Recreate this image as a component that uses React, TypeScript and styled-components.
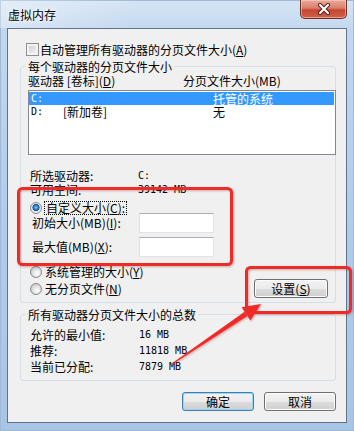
import styled, { createGlobalStyle } from 'styled-components'

const GlobalStyle = createGlobalStyle`
	html, body {
		margin: 0;
		padding: 0;
		background: #fff;
	}
	body {
		font-family: "Noto Sans CJK SC", "Noto Sans", sans-serif;
		font-size: 12px;
		color: #000;
	}
`

const Window = styled.div`
	position: relative;
	width: 354px;
	height: 431px;
	box-sizing: border-box;
	display: flex;
	flex-direction: column;
	background: linear-gradient(180deg, #d6e5f5 0px, #c3d8ef 28px, #b2cceb 200px, #a9c5e6 431px);
	box-shadow: inset 0 0 0 1px #9fb9d6;
`

const TitleBar = styled.div`
	height: 28px;
	display: flex;
	align-items: flex-start;
	padding-left: 8px;
	background: linear-gradient(90deg, rgba(255, 255, 255, 0.35) 0px, rgba(255, 255, 255, 0) 140px);
`

const Title = styled.div`
	margin-top: 9px;
	font-size: 12px;
	line-height: 12px;
	text-shadow: 0 0 6px #fff, 0 0 3px #fff;
`

const CloseButton = styled.div`
	margin-left: auto;
	margin-right: 7px;
	width: 47px;
	height: 19px;
	box-sizing: border-box;
	border: 1px solid #6d3026;
	border-top: none;
	border-radius: 0 0 5px 5px;
	background: linear-gradient(180deg, #e9a99a 0%, #d9806c 45%, #c7462f 55%, #d1604a 100%);
	box-shadow: inset 0 0 0 1px rgba(255, 220, 210, 0.5);
	display: flex;
	align-items: center;
	justify-content: center;
`

const Client = styled.div`
	flex: 1;
	margin: 0 7px 8px 7px;
	border: 1px solid #5f738c;
	background: #f0f0f0;
	padding: 0 10px 0 12px;
	display: flex;
	flex-direction: column;
`

const CheckRow = styled.div`
	margin-top: 14px;
	height: 13px;
	display: flex;
	align-items: center;
	gap: 1px;
	padding-left: 6px;
	line-height: 13px;
`

const CheckBox = styled.span`
	width: 13px;
	height: 13px;
	box-sizing: border-box;
	border: 1px solid #8e8f8f;
	background: linear-gradient(135deg, #cbcbcb 0%, #f7f7f7 100%);
	box-shadow: inset 0 0 0 2px #f4f4f4;
`

const Group = styled.fieldset<{ $top: number; $bottom: number }>`
	margin: ${(p) => p.$top}px 0 0 0;
	padding: 0 0 ${(p) => p.$bottom}px 0;
	border: 1px solid #d5dfe5;
	border-radius: 3px;
	min-width: 0;
`

const Legend = styled.legend`
	padding: 0 2px;
	margin-left: 5px;
	font-size: 12px;
	line-height: 13px;
`

const HeaderRow = styled.div`
	margin-top: 2px;
	padding-left: 7px;
	display: grid;
	grid-template-columns: 155px 1fr;
	line-height: 12px;
`

const ListBox = styled.div`
	margin: 3px 0 0 7px;
	width: 308px;
	height: 65px;
	box-sizing: border-box;
	border: 1px solid #828790;
	background: #fff;
	padding: 1px 1px 0 0;
`

const ListRow = styled.div<{ $selected?: boolean }>`
	height: 13px;
	line-height: 13px;
	padding-left: 2px;
	display: grid;
	grid-template-columns: 32px 150px 1fr;
	background: ${(p) => (p.$selected ? '#3399ff' : 'transparent')};
	color: ${(p) => (p.$selected ? '#fff' : '#000')};
`

const Mono = styled.span`
	font-family: "DejaVu Sans Mono", "Liberation Mono", monospace;
	font-size: 10px;
`

const InfoRow = styled.div<{ $label: number; $height: number; $top?: number }>`
	margin-top: ${(p) => p.$top ?? 0}px;
	padding-left: 9px;
	height: ${(p) => p.$height}px;
	line-height: ${(p) => p.$height}px;
	display: grid;
	grid-template-columns: ${(p) => p.$label}px 1fr;
`

const RadioRow = styled.div<{ $top: number; $height: number; $indent?: number }>`
	margin-top: ${(p) => p.$top}px;
	height: ${(p) => p.$height}px;
	line-height: ${(p) => p.$height}px;
	padding-left: ${(p) => p.$indent ?? 9}px;
	display: flex;
	align-items: center;
	gap: 3px;
`

const Radio = styled.span<{ $checked?: boolean }>`
	width: 12px;
	height: 12px;
	box-sizing: border-box;
	border-radius: 50%;
	border: 1px solid #8a8a8a;
	background: ${(p) =>
		p.$checked
			? 'radial-gradient(circle at 50% 45%, #8fd0fb 0px, #2a7fd4 2px, #154f93 3.3px, #e6e6e6 3.8px, #fbfbfb 100%)'
			: 'radial-gradient(circle at 60% 65%, #ffffff 0px, #f2f2f2 2px, #d0d0d0 6px)'};
`

const FocusText = styled.span`
	outline: 1px dotted #000;
	outline-offset: 0;
	padding: 0 1px;
	line-height: 12px;
`

const FieldRow = styled.div<{ $top: number }>`
	margin-top: ${(p) => p.$top}px;
	padding-left: 11px;
	display: grid;
	grid-template-columns: 107px 75px;
	align-items: center;
	line-height: 12px;
`

const TextBox = styled.div`
	height: 20px;
	box-sizing: border-box;
	border: 1px solid #e2e3ea;
	border-top-color: #abadb3;
	border-left-color: #dbdfe6;
	background: #fff;
`

const ButtonRow = styled.div`
	margin-top: 1px;
	height: 19px;
	padding: 0 7px 0 9px;
	display: flex;
	align-items: center;
	justify-content: space-between;
`

const Button = styled.div<{ $default?: boolean }>`
	width: 72px;
	height: 19px;
	box-sizing: border-box;
	border: 1px solid ${(p) => (p.$default ? '#3c7fb1' : '#707070')};
	border-radius: 3px;
	background: linear-gradient(180deg, #f2f2f2 0%, #ebebeb 50%, #dddddd 50%, #cfcfcf 100%);
	box-shadow: ${(p) => (p.$default ? 'inset 0 0 0 1px #9fd4f4' : 'inset 0 0 0 1px #fcfcfc')};
	text-align: center;
	font-size: 12px;
	line-height: 17px;
`

const SettingsButton = styled(Button)`
	width: 74px;
`

const DialogButtons = styled.div`
	margin-top: 11px;
	display: flex;
	justify-content: flex-end;
	gap: 10px;
`

const Overlay = styled.svg`
	position: absolute;
	left: 0;
	top: 0;
	width: 354px;
	height: 431px;
	pointer-events: none;
	filter: drop-shadow(1px 1px 1px rgba(120, 0, 0, 0.3));
`

const Key = styled.u`
	text-underline-offset: 1px;
`

export default function App() {
	return (
		<>
			<GlobalStyle />
			<Window>
				<TitleBar>
					<Title>虚拟内存</Title>
					<CloseButton>
						<svg width="14" height="12" viewBox="0 0 14 12">
							<path d="M3 2 L11 10 M11 2 L3 10" stroke="#4a1e16" strokeWidth="4" strokeLinecap="round" />
							<path d="M3 2 L11 10 M11 2 L3 10" stroke="#fff" strokeWidth="2.2" strokeLinecap="round" />
						</svg>
					</CloseButton>
				</TitleBar>
				<Client>
					<CheckRow>
						<CheckBox />
						<span>自动管理所有驱动器的分页文件大小(<Key>A</Key>)</span>
					</CheckRow>

					<Group $top={4} $bottom={4}>
						<Legend>每个驱动器的分页文件大小</Legend>
						<HeaderRow>
							<span>驱动器 [卷标](<Key>D</Key>)</span>
							<span>分页文件大小(MB)</span>
						</HeaderRow>
						<ListBox>
							<ListRow $selected>
								<Mono>C:</Mono>
								<span></span>
								<span>托管的系统</span>
							</ListRow>
							<ListRow>
								<Mono>D:</Mono>
								<span>[新加卷]</span>
								<span>无</span>
							</ListRow>
						</ListBox>

						<InfoRow $label={108} $height={14} $top={14}>
							<span>所选驱动器:</span>
							<Mono>C:</Mono>
						</InfoRow>
						<InfoRow $label={108} $height={14}>
							<span>可用空间:</span>
							<Mono>39142 MB</Mono>
						</InfoRow>

						<RadioRow $top={5} $height={11}>
							<Radio $checked />
							<FocusText>自定义大小(<Key>C</Key>):</FocusText>
						</RadioRow>
						<FieldRow $top={0}>
							<span>初始大小(MB)(<Key>I</Key>):</span>
							<TextBox />
						</FieldRow>
						<FieldRow $top={4}>
							<span>最大值(MB)(<Key>X</Key>):</span>
							<TextBox />
						</FieldRow>

						<RadioRow $top={9} $height={12}>
							<Radio />
							<span>系统管理的大小(<Key>Y</Key>)</span>
						</RadioRow>
						<ButtonRow>
							<RadioRow $top={0} $height={12} $indent={0}>
								<Radio />
								<span>无分页文件(<Key>N</Key>)</span>
							</RadioRow>
							<SettingsButton>设置(<Key>S</Key>)</SettingsButton>
						</ButtonRow>
					</Group>

					<Group $top={5} $bottom={5}>
						<Legend>所有驱动器分页文件大小的总数</Legend>
						<InfoRow $label={109} $height={16} $top={6}>
							<span>允许的最小值:</span>
							<Mono>16 MB</Mono>
						</InfoRow>
						<InfoRow $label={109} $height={16}>
							<span>推荐:</span>
							<Mono>11818 MB</Mono>
						</InfoRow>
						<InfoRow $label={109} $height={16}>
							<span>当前已分配:</span>
							<Mono>7879 MB</Mono>
						</InfoRow>
					</Group>

					<DialogButtons>
						<Button $default>确定</Button>
						<Button>取消</Button>
					</DialogButtons>
				</Client>

				<Overlay viewBox="0 0 354 431">
					<rect x="18.5" y="188.5" width="213" height="76" rx="4" fill="none" stroke="#ef2b27" strokeWidth="3" />
					<rect x="246.5" y="267.5" width="104" height="45" rx="4" fill="none" stroke="#ef2b27" strokeWidth="3" />
					<polygon points="172.3,364.5 171.7,363.5 244.6,311.8 247.4,316.0" fill="#ef2b27" />
					<polygon points="261,304 241.6,307.3 250.4,320.6" fill="#ef2b27" />
				</Overlay>
			</Window>
		</>
	)
}
